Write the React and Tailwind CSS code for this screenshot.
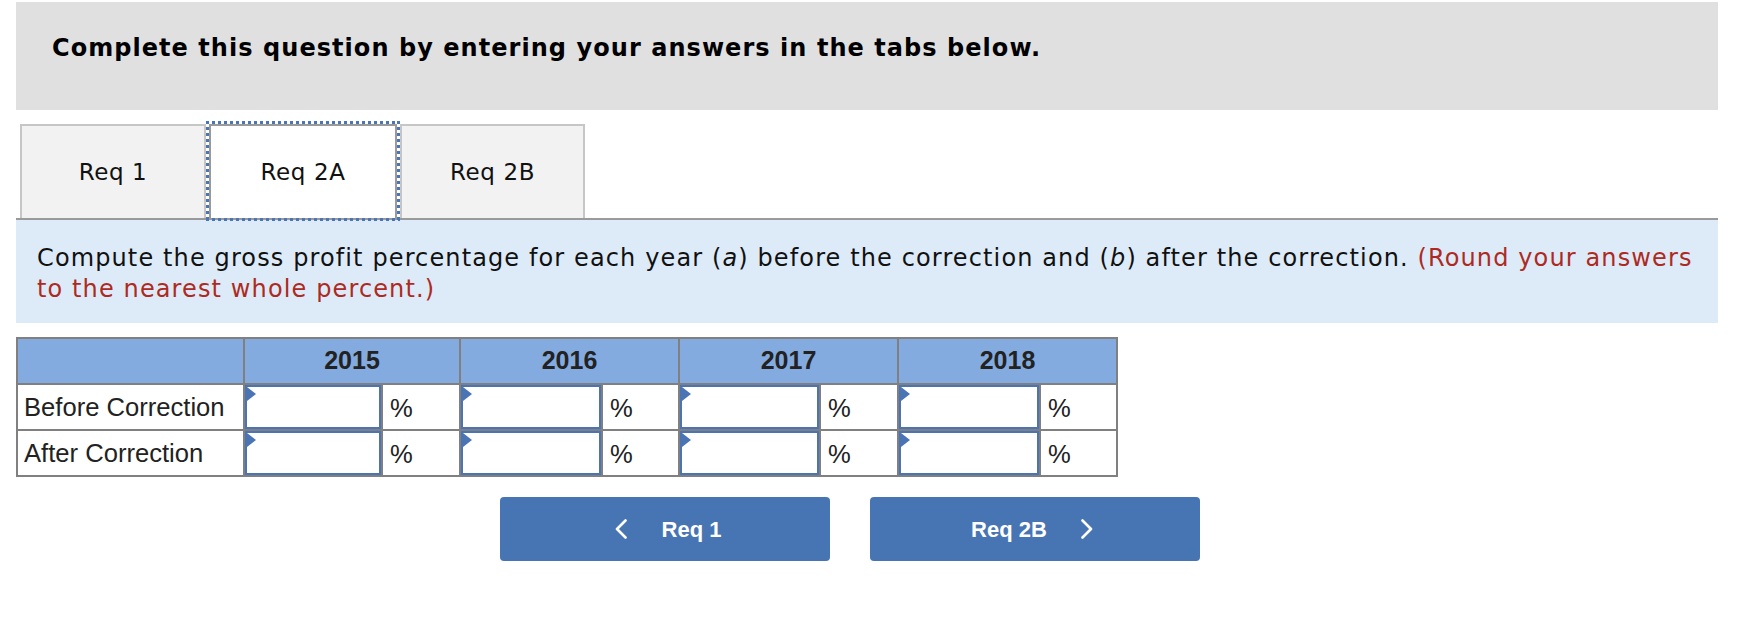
export default function App() {
  const dots = {
    h: "bg-[repeating-linear-gradient(90deg,#4a76b8_0px,#4a76b8_3px,transparent_3px,transparent_6px)]",
    v: "bg-[repeating-linear-gradient(180deg,#4a76b8_0px,#4a76b8_3px,transparent_3px,transparent_6px)]",
  };
  const years = ["2015", "2016", "2017", "2018"];
  const rows = ["Before Correction", "After Correction"];

  const InputCell = () => (
    <div className="bg-white h-[44px] p-[0px]">
      <div className="relative h-full w-full border-2 border-[#4a74b4] bg-white">
        <div className="absolute left-0 top-0 w-0 h-0 border-l-[9px] border-l-[#4a74b4] border-t-[7px] border-t-transparent border-b-[7px] border-b-transparent" />
      </div>
    </div>
  );
  const PctCell = () => (
    <div className="bg-white h-[44px] flex items-center pl-[7px] pt-[3px] text-[25.6px] text-[#222] font-['Liberation_Sans',Arial,sans-serif]">
      %
    </div>
  );

  return (
    <div className="w-[1752px] h-[642px] bg-white overflow-hidden">
      <div className="ml-[16px] w-[1702px]">
        {/* Heading */}
        <div className="mt-[2px] h-[108px] bg-[#e0e0e0] pl-[36px] pt-[32px]">
          <h1 className="font-['DejaVu_Sans',Verdana,sans-serif] font-bold text-[24px] leading-[28px] tracking-[1.05px] text-black">
            Complete this question by entering your answers in the tabs below.
          </h1>
        </div>

        {/* Tabs */}
        <div className="mt-[14px] flex pl-[4px] h-[94px] font-['DejaVu_Sans',Verdana,sans-serif] text-[23px] tracking-[0.6px] text-[#111]">
          <div className="w-[186px] h-[94px] border-2 border-b-0 border-[#c6c6c6] bg-[#f2f2f2] flex items-center justify-center">
            Req 1
          </div>
          <div className="relative z-10 mx-[3px] w-[188px] h-[94px] border-2 border-b-0 border-[#9a9a9a] bg-white flex items-center justify-center">
            Req 2A
            <div className={`absolute left-[-5px] right-[-5px] top-[-5px] h-[3px] ${dots.h}`} />
            <div className={`absolute left-[-5px] right-[-5px] bottom-[-3px] h-[3px] ${dots.h}`} />
            <div className={`absolute left-[-5px] top-[-5px] bottom-[-3px] w-[3px] ${dots.v}`} />
            <div className={`absolute right-[-5px] top-[-5px] bottom-[-3px] w-[3px] ${dots.v}`} />
          </div>
          <div className="w-[185px] h-[94px] border-2 border-b-0 border-[#c6c6c6] bg-[#f2f2f2] flex items-center justify-center">
            Req 2B
          </div>
        </div>
        <div className="h-[2px] bg-[#9a9a9a]" />

        {/* Instruction */}
        <div className="h-[103px] bg-[#ddebf8] pl-[21px] pr-[8px] pt-[23px] font-['DejaVu_Sans',Verdana,sans-serif] text-[24px] leading-[31px] tracking-[1.12px] text-[#111]">
          Compute the gross profit percentage for each year (<i>a</i>) before the correction and (<i>b</i>) after the correction.{" "}
          <span className="text-[#ad2a22]">(Round your answers to the nearest whole percent.)</span>
        </div>

        {/* Table */}
        <div className="mt-[14px] w-fit grid grid-cols-[225px_136px_76px_140px_75px_139px_76px_140px_75px] gap-[2px] p-[2px] bg-[#808080] font-['Liberation_Sans',Arial,sans-serif]">
          <div className="bg-[#83abdf] h-[44px]" />
          {years.map((y) => (
            <div key={y} className="col-span-2 bg-[#83abdf] h-[44px] flex items-center justify-center text-[25px] font-bold text-[#222]">
              {y}
            </div>
          ))}
          {rows.map((r) => (
            <div key={r} className="contents">
              <div className="bg-white h-[44px] flex items-center pl-[6px] pt-[1px] text-[25.6px] text-[#222]">
                {r}
              </div>
              {years.map((y) => (
                <div key={y} className="contents">
                  <InputCell />
                  <PctCell />
                </div>
              ))}
            </div>
          ))}
        </div>

        {/* Buttons */}
        <div className="mt-[20px] ml-[484px] flex gap-[40px] font-['Liberation_Sans',Arial,sans-serif] font-bold text-[22px] text-white">
          <div className="w-[330px] h-[64px] rounded-[4px] bg-[#4775b4] flex items-center justify-center gap-[35px] pl-[6px]">
            <svg width="12" height="20" viewBox="0 0 12 20" fill="none">
              <polyline points="10.5,1.5 2,10 10.5,18.5" stroke="white" strokeWidth="2.6" strokeLinecap="round" strokeLinejoin="round" />
            </svg>
            <span>Req 1</span>
          </div>
          <div className="w-[330px] h-[64px] rounded-[4px] bg-[#4775b4] flex items-center justify-center gap-[34px] pr-[6px]">
            <span>Req 2B</span>
            <svg width="12" height="20" viewBox="0 0 12 20" fill="none">
              <polyline points="1.5,1.5 10,10 1.5,18.5" stroke="white" strokeWidth="2.6" strokeLinecap="round" strokeLinejoin="round" />
            </svg>
          </div>
        </div>
      </div>
    </div>
  );
}
